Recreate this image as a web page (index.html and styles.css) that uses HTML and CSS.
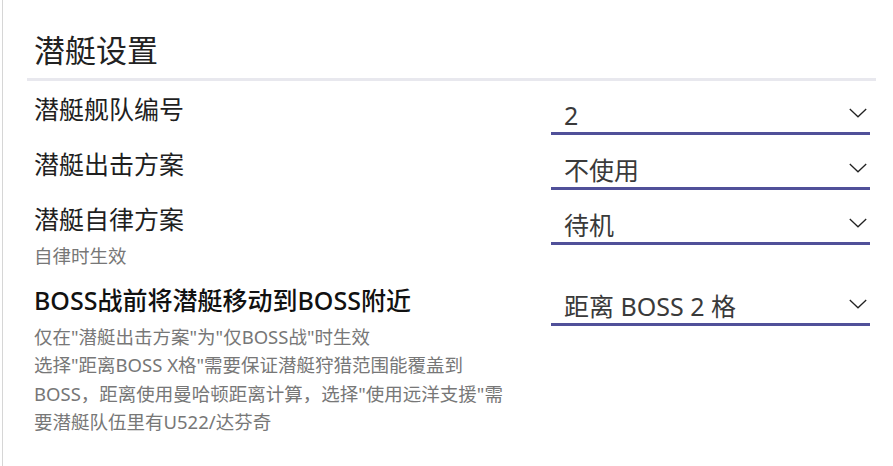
FILE: index.html
```html
<!DOCTYPE html>
<html lang="zh-CN">
<head>
<meta charset="utf-8">
<title>潜艇设置</title>
<link rel="stylesheet" href="styles.css">
</head>
<body>
<div class="panel">
  <div class="header"><h1 class="title">潜艇设置</h1></div>
  <div class="rows">
    <div class="row">
      <div class="info"><div class="label">潜艇舰队编号</div></div>
      <div class="select"><span class="value">2</span><svg class="chev" width="18" height="10" viewBox="0 0 18 10"><polyline points="0.8,1 9,8.8 17.2,1" fill="none" stroke="#222" stroke-width="1.3"/></svg></div>
    </div>
    <div class="row">
      <div class="info"><div class="label">潜艇出击方案</div></div>
      <div class="select"><span class="value">不使用</span><svg class="chev" width="18" height="10" viewBox="0 0 18 10"><polyline points="0.8,1 9,8.8 17.2,1" fill="none" stroke="#222" stroke-width="1.3"/></svg></div>
    </div>
    <div class="row">
      <div class="info"><div class="label">潜艇自律方案</div><div class="desc">自律时生效</div></div>
      <div class="select"><span class="value">待机</span><svg class="chev" width="18" height="10" viewBox="0 0 18 10"><polyline points="0.8,1 9,8.8 17.2,1" fill="none" stroke="#222" stroke-width="1.3"/></svg></div>
    </div>
    <div class="row">
      <div class="info"><div class="label label-strong">BOSS战前将潜艇移动到BOSS附近</div><div class="desc">仅在"潜艇出击方案"为"仅BOSS战"时生效<br>选择"距离BOSS X格"需要保证潜艇狩猎范围能覆盖到BOSS，距离使用曼哈顿距离计算，选择"使用远洋支援"需要潜艇队伍里有U522/达芬奇</div></div>
      <div class="select"><span class="value">距离 BOSS 2 格</span><svg class="chev" width="18" height="10" viewBox="0 0 18 10"><polyline points="0.8,1 9,8.8 17.2,1" fill="none" stroke="#222" stroke-width="1.3"/></svg></div>
    </div>
  </div>
</div>
</body>
</html>
```
FILE: styles.css
```css
html, body {
  margin: 0;
  padding: 0;
  background: #ffffff;
}
body {
  font-family: "Noto Sans", "Noto Sans CJK SC", sans-serif;
  color: #222222;
}
.panel {
  margin-left: 2px;
  border-left: 1px solid #d6d6d6;
  height: 466px;
  box-sizing: border-box;
  padding: 30px 17px 0 24px;
}
.header {
  padding: 0 0 8px 7px;
  border-bottom: 3px solid #e8e8ee;
}
.title {
  margin: 0;
  font-size: 31px;
  line-height: 40px;
  font-weight: 400;
  color: #222222;
}
.rows {
  margin-top: 11px;
  padding: 0 6px 0 7px;
  display: flex;
  flex-direction: column;
  gap: 12px;
}
.row {
  display: flex;
  align-items: flex-start;
}
.info {
  flex: 1;
  min-width: 0;
}
.label {
  font-size: 25px;
  line-height: 34px;
  color: #1f1f1f;
}
.label-strong {
  font-weight: 500;
  color: #111111;
}
.desc {
  margin-top: 6px;
  max-width: 482px;
  font-size: 18.5px;
  line-height: 28.5px;
  color: #777777;
}
.select {
  flex: none;
  width: 319px;
  box-sizing: border-box;
  display: flex;
  align-items: center;
  padding: 6px 3px 0 13px;
  border-bottom: 3px solid #505099;
}
.value {
  flex: 1;
  font-size: 25px;
  line-height: 34px;
  color: #3a3a3a;
}
.chev {
  display: block;
  margin-bottom: 4px;
}
```
